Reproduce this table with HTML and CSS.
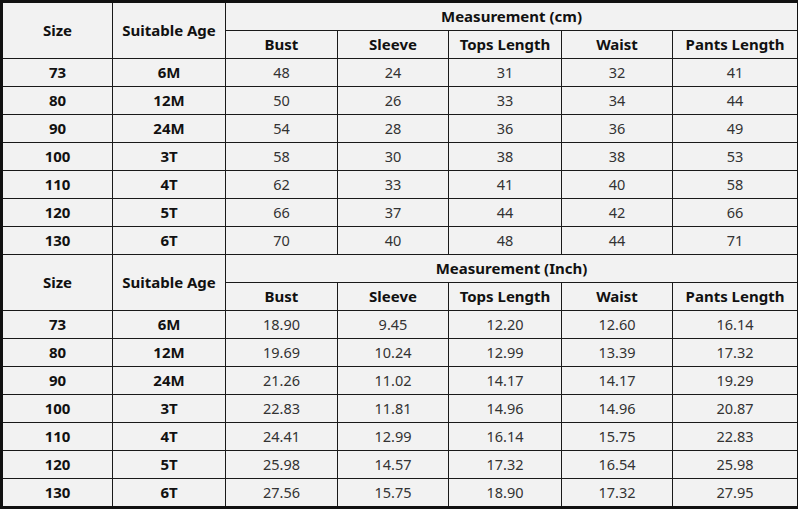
FILE: index.html
```html
<!DOCTYPE html>
<html>
<head>
<meta charset="utf-8">
<link rel="stylesheet" href="styles.css">
</head>
<body>
<table class="chart">
<colgroup>
<col class="c1"><col class="c2"><col class="c3"><col class="c4"><col class="c5"><col class="c6"><col class="c7">
</colgroup>
<tbody>
<tr class="hd"><th rowspan="2">Size</th><th rowspan="2">Suitable Age</th><th colspan="5">Measurement (cm)</th></tr>
<tr class="hd"><th>Bust</th><th>Sleeve</th><th>Tops Length</th><th>Waist</th><th>Pants Length</th></tr>
<tr><th>73</th><th>6M</th><td>48</td><td>24</td><td>31</td><td>32</td><td>41</td></tr>
<tr><th>80</th><th>12M</th><td>50</td><td>26</td><td>33</td><td>34</td><td>44</td></tr>
<tr><th>90</th><th>24M</th><td>54</td><td>28</td><td>36</td><td>36</td><td>49</td></tr>
<tr><th>100</th><th>3T</th><td>58</td><td>30</td><td>38</td><td>38</td><td>53</td></tr>
<tr><th>110</th><th>4T</th><td>62</td><td>33</td><td>41</td><td>40</td><td>58</td></tr>
<tr><th>120</th><th>5T</th><td>66</td><td>37</td><td>44</td><td>42</td><td>66</td></tr>
<tr><th>130</th><th>6T</th><td>70</td><td>40</td><td>48</td><td>44</td><td>71</td></tr>
<tr class="hd"><th rowspan="2">Size</th><th rowspan="2">Suitable Age</th><th colspan="5">Measurement (Inch)</th></tr>
<tr class="hd"><th>Bust</th><th>Sleeve</th><th>Tops Length</th><th>Waist</th><th>Pants Length</th></tr>
<tr><th>73</th><th>6M</th><td>18.90</td><td>9.45</td><td>12.20</td><td>12.60</td><td>16.14</td></tr>
<tr><th>80</th><th>12M</th><td>19.69</td><td>10.24</td><td>12.99</td><td>13.39</td><td>17.32</td></tr>
<tr><th>90</th><th>24M</th><td>21.26</td><td>11.02</td><td>14.17</td><td>14.17</td><td>19.29</td></tr>
<tr><th>100</th><th>3T</th><td>22.83</td><td>11.81</td><td>14.96</td><td>14.96</td><td>20.87</td></tr>
<tr><th>110</th><th>4T</th><td>24.41</td><td>12.99</td><td>16.14</td><td>15.75</td><td>22.83</td></tr>
<tr><th>120</th><th>5T</th><td>25.98</td><td>14.57</td><td>17.32</td><td>16.54</td><td>25.98</td></tr>
<tr><th>130</th><th>6T</th><td>27.56</td><td>15.75</td><td>18.90</td><td>17.32</td><td>27.95</td></tr>
</tbody>
</table>
</body>
</html>
```
FILE: styles.css
```css
html, body {
  margin: 0;
  padding: 0;
  background: #ffffff;
}
body {
  padding: 0;
  font-family: "Noto Sans", "Open Sans", sans-serif;
}
.chart {
  border-collapse: collapse;
  table-layout: fixed;
  width: 797px;
  background: #f2f2f2;
  border: 3px solid #111;
}
.c1 { width: 111px; }
.c2 { width: 113px; }
.c3 { width: 112px; }
.c4 { width: 111px; }
.c5 { width: 113px; }
.c6 { width: 111px; }
.c7 { width: 126px; }
.chart th, .chart td {
  border: 1px solid #1a1a1a;
  height: 27px;
  padding: 0;
  text-align: center;
  vertical-align: middle;
  line-height: 1;
}
.chart th {
  font-weight: 700;
  font-size: 15px;
  color: #111;
}
.chart td {
  font-weight: 400;
  font-size: 14.5px;
  color: #333;
}
.hd th {
  font-size: 15px;
}
```
